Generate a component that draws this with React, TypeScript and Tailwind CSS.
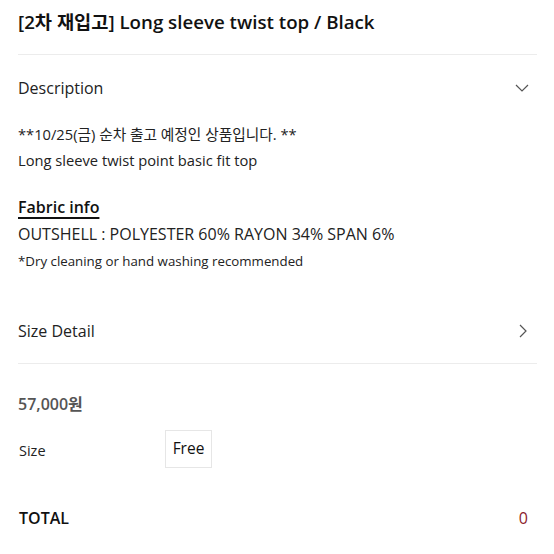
export default function App() {
  const font = { fontFamily: '"Open Sans", "Noto Sans CJK KR", sans-serif' };
  return (
    <div className="w-[554px] h-[554px] bg-white text-[#222] overflow-hidden" style={font}>
      <div className="pl-[18px] pr-[17px]">
        <div className="h-[44px] pt-[8px] text-[18.7px] leading-[28px] font-semibold text-[#111]">
          [2차 재입고] Long sleeve twist top / Black
        </div>
        <div className="h-px bg-[#ececec] mt-[10px]" />
        <div className="h-[66px] flex items-center justify-between">
          <span className="text-[16px] text-[#222]">Description</span>
          <svg width="14" height="8" viewBox="0 0 14 8" className="mr-[8px]">
            <path d="M1 1 L7 7 L13 1" fill="none" stroke="#555" strokeWidth="1.2" />
          </svg>
        </div>
        <div className="text-[14.7px] leading-[26px] text-[#222]">
          <div>**10/25(금) 순차 출고 예정인 상품입니다. **</div>
          <div>Long sleeve twist point basic fit top</div>
        </div>
        <div className="mt-[21px] text-[16px] leading-[26px] font-semibold text-[#111] underline underline-offset-[4px] decoration-[1.5px] w-fit">
          Fabric info
        </div>
        <div className="text-[16px] leading-[29px] text-[#222]">OUTSHELL : POLYESTER 60% RAYON 34% SPAN 6%</div>
        <div className="text-[13.3px] leading-[25px] text-[#222]">*Dry cleaning or hand washing recommended</div>
        <div className="h-[79px] flex items-end justify-between pb-[8px]">
          <span className="text-[16px] leading-[28px] text-[#222]">Size Detail</span>
          <svg width="8" height="14" viewBox="0 0 8 14" className="mr-[10px] mb-[7px]">
            <path d="M1 1 L7 7 L1 13" fill="none" stroke="#555" strokeWidth="1.2" />
          </svg>
        </div>
        <div className="h-px bg-[#ececec] mt-[10px]" />
        <div className="mt-[28px] text-[16px] leading-[24px] font-semibold text-[#555]">57,000원</div>
        <div className="mt-[14px] flex items-center">
          <span className="w-[147px] text-[14.5px] text-[#222] mt-[4px] pl-[1px]">Size</span>
          <div className="h-[38px] w-[47px] border border-[#e6e6e6] flex items-center justify-center text-[15.5px] text-[#111]">
            Free
          </div>
        </div>
        <div className="mt-[38px] flex items-center justify-between">
          <span className="text-[16px] font-semibold text-[#111] pl-[1px]">TOTAL</span>
          <span className="text-[16px] text-[#8b1c2c] mr-[9px]">0</span>
        </div>
      </div>
    </div>
  );
}
